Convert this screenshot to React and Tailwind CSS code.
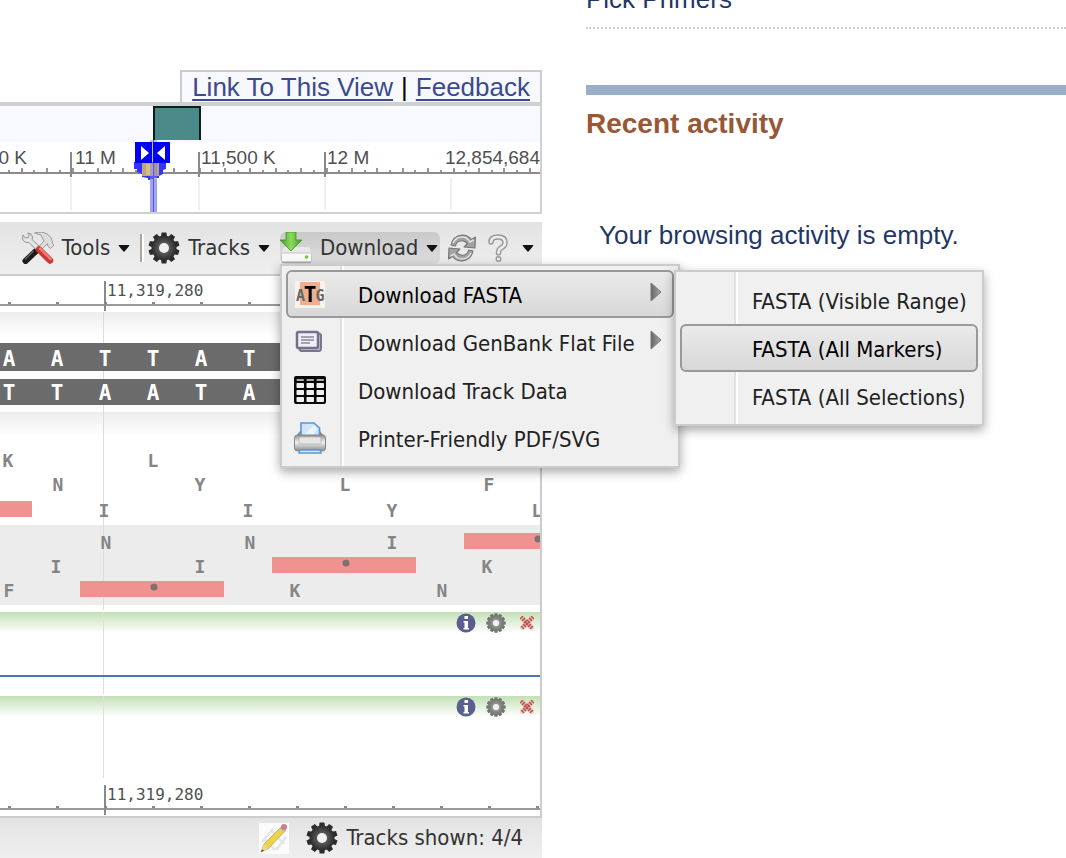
import React from "react";

const range = (n) => Array.from({ length: n }, (_, i) => i);

function Gear({ className, teeth = 10, dark = "#2b2b2b", light = "#6a6a6a", hole = 5, id }) {
  return (
    <svg viewBox="0 0 32 32" className={className} aria-hidden="true">
      <defs>
        <radialGradient id={id}>
          <stop offset="0.2" stopColor={light} />
          <stop offset="1" stopColor={dark} />
        </radialGradient>
      </defs>
      {range(teeth).map((i) => (
        <path
          key={i}
          d="M13 5 L13.600 0.500 H18.400 L19 5 Z"
          fill={dark}
          transform={`rotate(${(360 / teeth) * i} 16 16)`}
        />
      ))}
      <circle cx="16" cy="16" r="12.500" fill={`url(#${id})`} />
      <circle cx="16" cy="16" r={hole} fill="#f2f2f2" />
    </svg>
  );
}

function ToolsIcon() {
  return (
    <svg viewBox="0 0 32 32" className="size-8" aria-hidden="true">
      <path d="M11.500 20.500 L22 9 L19 3 L12.500 1 Q20 -1 25 2 Q30 5 30.500 11 L32 13 L28.500 16.500 L26 14.500 L25.500 11.500 L14 23 Z" fill="#dcdcdc" stroke="#9a9a9a" />
      <path d="M13.500 19.500 L3.500 29" stroke="#1b1b1b" strokeWidth="6" strokeLinecap="round" />
      <path d="M11.500 19 L3 27.500" stroke="#6a6a6a" strokeWidth="1.200" />
      <path d="M1 3 L3.500 6 L6.500 5.500 L7 2.500 L5.500 1 Q10 1 10.500 5 L10 7.500 L18 15 L15 18.500 L7 10.500 Q2 11 0.500 7 Z" fill="#e4e4e4" stroke="#929292" />
      <path d="M17 17.500 L28 28.500" stroke="#c93731" strokeWidth="6.500" strokeLinecap="round" />
      <path d="M18 16.500 L28.500 27" stroke="#ee7d76" strokeWidth="2.500" strokeLinecap="round" />
    </svg>
  );
}

function DownloadIcon() {
  return (
    <svg viewBox="0 0 32 32" className="size-8" aria-hidden="true">
      <defs>
        <linearGradient id="arrow" x1="0" x2="1">
          <stop offset="0" stopColor="#3f9a2c" />
          <stop offset="0.5" stopColor="#8edb5d" />
          <stop offset="1" stopColor="#3f9a2c" />
        </linearGradient>
      </defs>
      <path d="M4 15 H29 L32 22 H1 Z" fill="#e8e8e8" />
      <rect x="1.500" y="21" width="30" height="9" rx="1.500" fill="#f9f9f9" stroke="#c6c6c6" />
      <path d="M2 30.500 H31" stroke="#a9a9a9" strokeWidth="1.500" />
      <circle cx="26.500" cy="25" r="1.800" fill="#6ccb3f" />
      <path d="M6 0 H16 V8 H22 L11 19 L0 8 H6 Z" fill="url(#arrow)" stroke="#45932f" strokeWidth="0.800" />
    </svg>
  );
}

function RefreshIcon() {
  return (
    <svg viewBox="0 0 28 28" className="size-7" aria-hidden="true">
      <g fill="#a2a2a2" stroke="#747474" strokeWidth="1.100" strokeLinejoin="round">
        <path d="M3 11 Q5 2 14 1 Q20 1 23.500 5.500 L27.500 3 L27 14 L16 13 L19.500 9.500 Q16 6 12 7 Q8 8 7.500 12 Z" />
        <path d="M25 17 Q23 26 14 27 Q8 27 4.500 22.500 L0.500 25 L1 14 L12 15 L8.500 18.500 Q12 22 16 21 Q20 20 20.500 16 Z" />
      </g>
      <path d="M5 9 Q8 3 14 3 Q19 3 22 8 L25.500 6" fill="none" stroke="#e2e2e2" strokeWidth="1.500" />
      <path d="M23 19 Q20 25 14 25 Q9 25 6 20 L2.500 22" fill="none" stroke="#dcdcdc" strokeWidth="1.500" />
    </svg>
  );
}

function HelpIcon() {
  return (
    <svg viewBox="0 0 20 28" className="h-7 w-5" aria-hidden="true">
      <path d="M3 8 Q3 3 10 3 Q17 3 17 8.500 Q17 12 13 14 Q10.500 15.500 10.500 19" fill="none" stroke="#999" strokeWidth="5.500" strokeLinecap="round" />
      <path d="M3 8 Q3 3 10 3 Q17 3 17 8.500 Q17 12 13 14 Q10.500 15.500 10.500 19" fill="none" stroke="#ededed" strokeWidth="2.600" strokeLinecap="round" />
      <circle cx="10.500" cy="25" r="2.300" fill="#eee" stroke="#999" strokeWidth="1.400" />
    </svg>
  );
}

function Caret() {
  return (
    <svg viewBox="0 0 12 7" className="h-[7px] w-3 shrink-0" aria-hidden="true">
      <path d="M0.500 0 H11.500 Q11.500 1 6 7 Q0.500 1 0.500 0 Z" fill="#111" />
    </svg>
  );
}

function FastaIcon() {
  return (
    <svg viewBox="0 0 32 32" className="size-8" aria-hidden="true">
      <rect x="1" y="3" width="30" height="27" fill="#f7f2ee" />
      <rect x="6" y="4" width="20" height="23" fill="#efaf8e" />
      <g fontFamily="DejaVu Sans Mono, monospace" fontWeight="700" textAnchor="middle">
        <text x="6.500" y="23" fontSize="15" fill="#666">A</text>
        <text x="26" y="23" fontSize="15" fill="#666">G</text>
        <text x="16" y="23.500" fontSize="21" fill="#000">T</text>
      </g>
    </svg>
  );
}

function GenBankIcon() {
  return (
    <svg viewBox="0 0 32 32" className="size-8" aria-hidden="true">
      <path d="M5 23 L7 25 H25 Q27 25 27 22 V9 L25 7" fill="#c3c3cc" stroke="#77778a" strokeWidth="2" />
      <rect x="3" y="6" width="21" height="16" rx="1.500" fill="#efeff4" stroke="#74708f" strokeWidth="2.500" />
      <path d="M7 11 H20 M7 14 H20 M7 17 H16" stroke="#89879a" strokeWidth="1.500" />
    </svg>
  );
}

function TableIcon() {
  return (
    <svg viewBox="0 0 32 32" className="size-8" aria-hidden="true">
      <rect y="2" width="32" height="28" rx="2" fill="#080808" />
      {[[5, "#aaa"], [9, "#f0f0f0"], [16, "#f0f0f0"], [23, "#f0f0f0"]].map(([y, fill]) =>
        range(3).map((c) => (
          <rect key={`${y}-${c}`} x={2.5 + c * 10} y={y} width="7.500" height={y === 5 ? 2 : 5} rx="0.800" fill={fill} />
        ))
      )}
    </svg>
  );
}

function PrinterIcon() {
  return (
    <svg viewBox="0 0 32 32" className="size-8" aria-hidden="true">
      <defs>
        <linearGradient id="printer" x1="0" x2="0" y1="0" y2="1">
          <stop offset="0" stopColor="#8f8f8f" />
          <stop offset="0.450" stopColor="#f1f1f1" />
          <stop offset="1" stopColor="#8b8b8b" />
        </linearGradient>
      </defs>
      <path d="M2 14 L6 9 H26 L30 14 Z" fill="#8e8e8e" />
      <path d="M7 17 V1 H20 L25.500 6 V17 Z" fill="#cfe4fb" stroke="#5a94da" strokeWidth="1.600" />
      <path d="M10 13 L20 3 L23 7 L18 15 Z" fill="#e9f4ff" />
      <rect x="0.500" y="13" width="31" height="16" rx="3" fill="url(#printer)" stroke="#858585" />
      <rect x="5" y="15" width="22" height="7" rx="1.500" fill="#e6e6e6" stroke="#aaa" strokeWidth="0.700" />
      <path d="M6 28 H26 L27 31 H5 Z" fill="#ddecfd" stroke="#5a94da" strokeWidth="1.300" />
    </svg>
  );
}

function PencilIcon() {
  return (
    <svg viewBox="0 0 32 32" className="size-8" aria-hidden="true">
      <rect x="1" y="1" width="30" height="31" fill="#fbfbf9" />
      <path d="M4 20 L15 7 M18 28 L28 15 M6 17 L17 28 M13 8 L26 22" stroke="#e3e5e7" strokeWidth="2.500" fill="none" />
      <path d="M24 4 L28 8 L10 27 L3 30 L6 22 Z" fill="#ead44c" stroke="#c0ab4a" strokeWidth="0.800" />
      <path d="M6 22 L10 27 L3 30 Z" fill="#efd3a2" />
      <path d="M4 27.500 L6 28.500 L3 30 Z" fill="#333" />
      <path d="M22.500 5.500 L27 9.500" stroke="#b9b9b9" strokeWidth="2.500" />
      <circle cx="26" cy="5" r="3" fill="#c9808a" />
    </svg>
  );
}

function InfoIcon() {
  return (
    <svg viewBox="0 0 20 20" className="size-5" aria-hidden="true">
      <circle cx="10" cy="10" r="9.500" fill="#5a5f90" />
      <path d="M8.500 3 H12 V6 H8.500 Z M7.500 8 H12 V15 H13 V16.500 H7.500 V15 H8.500 V9.500 H7.500 Z" fill="#fff" />
    </svg>
  );
}

function CloseIcon() {
  return (
    <svg viewBox="0 0 14 14" className="size-3.5" aria-hidden="true">
      <path d="M1.500 1.500 L12.500 12.500 M12.500 1.500 L1.500 12.500" stroke="#eab497" strokeWidth="4.200" />
      <path d="M1 1 L13 13 M13 1 L1 13" stroke="#bb4a5c" strokeWidth="4.200" strokeDasharray="1.400 1.400" />
    </svg>
  );
}

function SubmenuArrow() {
  return (
    <svg viewBox="0 0 12 20" className="mr-2.5 mb-1 h-5 w-3" aria-hidden="true">
      <defs>
        <linearGradient id="sub" x1="0" x2="1">
          <stop offset="0" stopColor="#666" />
          <stop offset="1" stopColor="#aaa" />
        </linearGradient>
      </defs>
      <path d="M1 1 L11 10 L1 19 Z" fill="url(#sub)" stroke="#777" />
    </svg>
  );
}

function OverviewRuler() {
  const labels = [
    [75, "11 M"],
    [201, "11,500 K"],
    [327, "12 M"],
  ];
  return (
    <svg viewBox="0 0 540 106" className="h-[106px] w-[540px] shrink-0" role="img" aria-label="Sequence overview">
      <rect width="540" height="36" fill="#f8f8ff" />
      <rect x="153" width="48" height="34" fill="#111d1d" />
      <rect x="155" y="2" width="44" height="32" fill="#4b8a89" />
      {[70, 198, 324, 450].map((x) => (
        <rect key={x} x={x} y="72" width="2" height="32" fill="#efefef" />
      ))}
      {range(43).map((i) => (
        <rect key={i} x={8 + Math.round(i * 12.7)} y={i % 2 ? 62 : 64} width="2" height="4" fill="#969696" />
      ))}
      <rect y="66" width="540" height="2" fill="#8b8b8b" />
      {[70, 198, 324].map((x) => (
        <rect key={x} x={x} y="46" width="2" height="25" fill="#888" />
      ))}
      <g fontFamily="Liberation Sans, sans-serif" fontSize="19" fill="#505050">
        <text x="27" y="58" textAnchor="end">0 K</text>
        {labels.map(([x, t]) => (
          <text key={t} x={x} y="58">{t}</text>
        ))}
        <text x="540" y="58" textAnchor="end">12,854,684</text>
      </g>
      <path d="M134 56 H166 V63 L163 64 V68 L159 70 V72 H154 V74 H148 V72 L142 71 V68 L137 66 V63 H134 Z" fill="#3434fa" />
      <rect x="142" y="57" width="17" height="13" fill="#bda67f" />
      <rect x="146" y="58" width="7" height="11" fill="#d8bd82" />
      <rect x="150" y="73" width="7" height="33" fill="#a2a2fb" />
      <rect x="150" y="34" width="7" height="39" fill="#8080f0" fillOpacity="0.5" />
      <rect x="153" y="34" width="1" height="72" fill="#5959e8" />
      <rect x="135" y="36" width="17" height="21" fill="#0000f2" />
      <rect x="153" y="36" width="17" height="21" fill="#0000f2" />
      <path d="M141 40 L149 47 L141 54 Z M165 40 L157 47 L165 54 Z" fill="#fff" />
    </svg>
  );
}

function PositionRuler() {
  return (
    <svg viewBox="0 0 540 36" className="h-9 w-[540px] shrink-0" role="img" aria-label="Position ruler">
      {range(12).map((i) => (
        <rect key={i} x={8 + i * 48} y="26" width="3" height="2" fill="#888" />
      ))}
      <rect y="28" width="540" height="2" fill="#999" />
      <rect x="104" y="5" width="2" height="30" fill="#8a8a8a" />
      <text x="107" y="20" fontFamily="DejaVu Sans Mono, monospace" fontSize="16" fill="#505050">11,319,280</text>
    </svg>
  );
}

const strands = [
  { y: 31, h: 28, baseline: 54, bases: "AATTAT" },
  { y: 67, h: 26, baseline: 88, bases: "TTAATA" },
];

const residues = [
  [8, 155, "K"], [153, 155, "L"],
  [58, 179, "N"], [200, 179, "Y"], [345, 179, "L"], [489, 179, "F"],
  [104, 205, "I"], [248, 205, "I"], [392, 205, "Y"], [537, 205, "L"],
  [106, 237, "N"], [250, 237, "N"], [392, 237, "I"],
  [56, 261, "I"], [200, 261, "I"], [487, 261, "K"],
  [9, 285, "F"], [295, 285, "K"], [442, 285, "N"],
];

const stops = [
  [-112, 189], [80, 269], [272, 245], [464, 221],
];

function SequenceTrack() {
  return (
    <svg viewBox="0 0 540 300" className="h-[300px] w-[540px] shrink-0" role="img" aria-label="Sequence and six-frame translation">
      <defs>
        <linearGradient id="fade" x1="0" x2="0" y1="0" y2="1">
          <stop offset="0" stopColor="#ededed" />
          <stop offset="1" stopColor="#fff" />
        </linearGradient>
      </defs>
      <rect width="540" height="24" fill="url(#fade)" />
      <rect y="100" width="540" height="24" fill="url(#fade)" />
      <rect y="213" width="540" height="80" fill="#ececec" />
      <rect x="103" width="1" height="298" fill="#dcdcdc" />
      {strands.map((s) => (
        <g key={s.y}>
          <rect y={s.y} width="540" height={s.h} fill="#6b6b6b" />
          <g fontFamily="DejaVu Sans Mono, monospace" fontWeight="700" fontSize="21" fill="#fff" textAnchor="middle">
            {s.bases.split("").map((b, i) => (
              <text key={i} x={9 + i * 48} y={s.baseline}>{b}</text>
            ))}
          </g>
        </g>
      ))}
      {stops.map(([x, y]) => (
        <g key={x}>
          <rect x={x} y={y} width="144" height="16" fill="#f09290" />
          <circle cx={x + 74} cy={y + 6} r="3.500" fill="#80706f" />
        </g>
      ))}
      <g fontFamily="DejaVu Sans Mono, monospace" fontWeight="700" fontSize="18" fill="#858585" textAnchor="middle">
        {residues.map(([x, y, t]) => (
          <text key={`${x}-${y}`} x={x} y={y}>{t}</text>
        ))}
      </g>
    </svg>
  );
}

function EmptyTrack({ line, id }) {
  return (
    <section className="relative flex h-[84px] justify-end bg-linear-to-b from-[#c3e0b6] to-white to-25% pr-1.5">
      <svg viewBox="0 0 540 84" className="absolute top-0 right-0 h-[84px] w-[540px]" aria-hidden="true">
        <rect x="103" width="1" height="82" fill="#dedede" />
        {line && <rect y="63" width="540" height="2" fill="#4a77b4" />}
      </svg>
      <div className="relative flex h-[22px] items-center gap-2.5">
        <button type="button" aria-label="Track information"><InfoIcon /></button>
        <button type="button" aria-label="Track settings">
          <Gear id={id} className="size-5" teeth={12} dark="#71756f" light="#a0a0a0" hole={5} />
        </button>
        <button type="button" aria-label="Close track" className="ml-1"><CloseIcon /></button>
      </div>
    </section>
  );
}

function MenuItem({ icon, label, active, submenu }) {
  return (
    <button
      type="button"
      role="menuitem"
      className={`flex h-12 w-full items-center rounded-md border-2 text-left whitespace-nowrap ${
        active
          ? "border-[#999] bg-linear-to-b from-[#eaeaea] to-[#d8d8d8] text-black"
          : "border-transparent text-[#222]"
      }`}
    >
      <span className="ml-1.5 flex w-8 shrink-0 justify-center">{icon}</span>
      <span className="flex-1 pt-1 pl-8">{label}</span>
      {submenu && <SubmenuArrow />}
    </button>
  );
}

const menuPanel =
  "absolute border-2 border-[#ccc] bg-[#f0f0f0] p-1 shadow-[0_4px_10px_rgba(0,0,0,0.35)]";

function DownloadMenu() {
  return (
    <div role="menu" aria-label="Download" className={`${menuPanel} top-full left-0 z-10 w-[400px]`}>
      <div className="absolute inset-y-0 left-[58px] w-1 border-l-2 border-[#e0e0e0] bg-white" />
      <div className="relative">
        <MenuItem icon={<FastaIcon />} label="Download FASTA" active submenu />
        <div role="menu" aria-label="Download FASTA" className={`${menuPanel} top-0 left-full w-[310px]`}>
          <div className="absolute inset-y-0 left-[58px] w-1 border-l-2 border-[#e0e0e0] bg-white" />
          <div className="relative">
            <MenuItem label="FASTA (Visible Range)" />
            <MenuItem label="FASTA (All Markers)" active />
            <MenuItem label="FASTA (All Selections)" />
          </div>
        </div>
      </div>
      <div className="relative -z-10">
        <MenuItem icon={<GenBankIcon />} label="Download GenBank Flat File" submenu />
        <MenuItem icon={<TableIcon />} label="Download Track Data" />
        <MenuItem icon={<PrinterIcon />} label="Printer-Friendly PDF/SVG" />
      </div>
    </div>
  );
}

function Toolbar() {
  const button = "flex h-8 items-center gap-2";
  return (
    <div className="flex h-[54px] items-center justify-end border-b-2 border-[#ccc] bg-linear-to-b from-[#e3e3e3] to-[#efefef] pr-2 text-[#333]">
      <button type="button" className={button}><ToolsIcon />Tools<Caret /></button>
      <div className="ml-2.5 h-7 w-1 border-l-2 border-[#aca899] bg-white" />
      <button type="button" className={`${button} ml-1`}>
        <Gear id="gear-toolbar" className="size-8" />Tracks<Caret />
      </button>
      <div className="relative ml-2.5">
        <button type="button" aria-haspopup="menu" aria-expanded="true" className={`${button} w-40 rounded-md bg-linear-to-b from-[#c9c9c9] to-[#dedede]`}>
          <DownloadIcon />Download<Caret />
        </button>
        <DownloadMenu />
      </div>
      <button type="button" aria-label="Refresh" className="ml-2"><RefreshIcon /></button>
      <button type="button" aria-label="Help" className="ml-3 flex items-center gap-3.5"><HelpIcon /><Caret /></button>
    </div>
  );
}

function SequenceViewer() {
  return (
    <main className="min-w-0 pt-[70px]">
      <nav className="ml-auto flex h-8 w-fit items-center gap-2 border-2 border-b-0 border-[#ccc] bg-[#f8f8ff] px-2.5 font-['Liberation_Sans',sans-serif] text-[26px] whitespace-nowrap">
        <a href="#link" className="text-[#3a4a8c] underline decoration-2 underline-offset-3">Link To This View</a>
        <span className="text-black">|</span>
        <a href="#feedback" className="text-[#3a4a8c] underline decoration-2 underline-offset-3">Feedback</a>
      </nav>
      <div className="flex justify-end border-t-4 border-r-2 border-b-2 border-[#d0d0d0]">
        <OverviewRuler />
      </div>
      <div className="mt-2 font-['DejaVu_Sans_Condensed','Noto_Sans',sans-serif] text-[22px] leading-8">
        <Toolbar />
        <div className="border-r-2 border-b-2 border-[#ccc] bg-white">
          <div className="flex justify-end"><PositionRuler /></div>
          <div className="flex justify-end"><SequenceTrack /></div>
          <EmptyTrack line id="gear-a" />
          <EmptyTrack id="gear-b" />
          <div className="flex justify-end"><PositionRuler /></div>
        </div>
        <footer className="flex h-10 items-center justify-end bg-linear-to-b from-[#e3e3e3] to-[#efefef] pr-[19px] text-[#333]">
          <button type="button" aria-label="Edit"><PencilIcon /></button>
          <button type="button" className="ml-4 flex items-center gap-2">
            <Gear id="gear-status" className="size-8" />Tracks shown: 4/4
          </button>
        </footer>
      </div>
    </main>
  );
}

function Sidebar() {
  return (
    <aside className="flex min-w-0 flex-col font-['Liberation_Sans',sans-serif] text-[26px] leading-[30px] text-[#1f3768]">
      <a href="#primers" className="-mt-4 border-b-2 border-dotted border-[#ccc] pb-[13px]">Pick Primers</a>
      <div className="mt-14 h-2.5 bg-[#9baec8]" />
      <h2 className="mt-[13px] text-[28px] leading-8 font-bold text-[#985735]">Recent activity</h2>
      <p className="mt-20 pl-[13px]">Your browsing activity is empty.</p>
    </aside>
  );
}

export default function App() {
  return (
    <div className="grid grid-cols-[minmax(0,542fr)_minmax(0,480fr)] gap-11 bg-white">
      <SequenceViewer />
      <Sidebar />
    </div>
  );
}
